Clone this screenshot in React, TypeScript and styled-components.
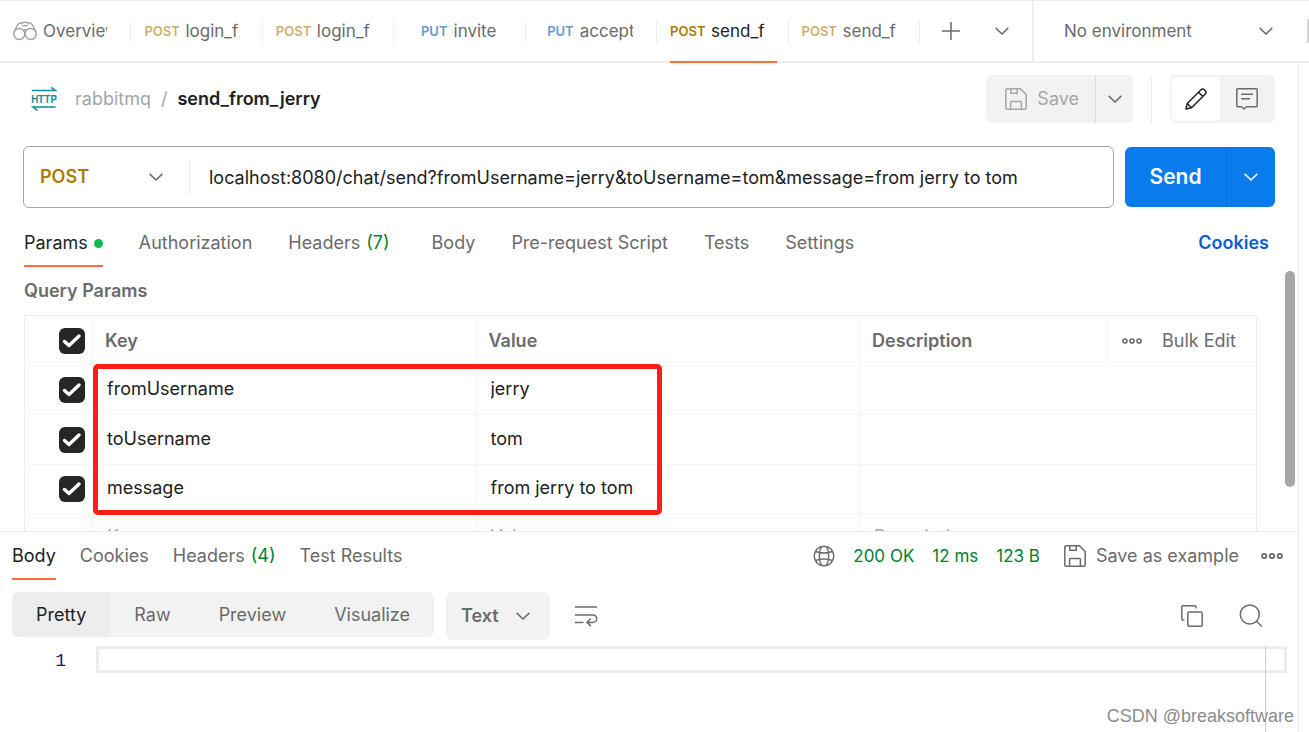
import React from "react";
import styled, { createGlobalStyle } from "styled-components";

const color = {
  text: "#212121",
  muted: "#6b6b6b",
  faint: "#a6a6a6",
  line: "#ededed",
  lineSoft: "#f6f6f6",
  fill: "#f2f2f2",
  orange: "#ff6c37",
  green: "#007f31",
  post: "#ad7a03",
  put: "#0053b8",
  blue: "#097bed",
};

const Global = createGlobalStyle`
  * { box-sizing: border-box; }
  body { margin: 0; background: #fff; }
  body, button, input, select {
    font-family: Inter, "Liberation Sans", sans-serif;
    font-size: 18px;
    line-height: 24px;
    color: ${color.muted};
  }
  button, input, select { border: 0; margin: 0; padding: 0; background: none; outline: none; border-radius: 0; }
  button, select { cursor: pointer; }
  svg { display: block; flex: none; }
`;

const Page = styled.div`
  position: relative;
  display: flex;
  flex-direction: column;
  height: 100vh;
  overflow: hidden;
`;

const TopBar = styled.header`
  display: flex;
  flex: none;
  height: 63px;
  border-top: 1px solid ${color.line};
  border-bottom: 2px solid ${color.line};
`;

const TabStrip = styled.nav`
  display: flex;
  flex: 0 1 920px;
  min-width: 0;
`;

const RequestTab = styled.button<{ $active?: boolean }>`
  position: relative;
  display: flex;
  flex: 1 1 0;
  min-width: 0;
  height: 60px;
  align-items: center;
  padding: 0 24px 0 13px;
  font-size: 17px;
  color: ${(p) => (p.$active ? color.text : color.muted)};
  &::before {
    content: "";
    position: absolute;
    right: 0;
    top: 19px;
    height: 24px;
    border-right: 1px solid ${color.line};
  }
  &::after {
    content: "";
    position: absolute;
    display: ${(p) => (p.$active ? "block" : "none")};
    left: 13px;
    right: 12px;
    bottom: -2px;
    height: 2px;
    background: ${color.orange};
  }
`;

const TabClip = styled.span<{ $centered?: boolean }>`
  display: flex;
  flex: 1;
  min-width: 0;
  align-items: center;
  justify-content: ${(p) => (p.$centered ? "center" : "flex-start")};
  gap: 6px;
  overflow: hidden;
  white-space: nowrap;
`;

const Method = styled.span<{ $kind: string; $active?: boolean }>`
  flex: none;
  width: 35px;
  font-size: 13px;
  font-weight: 600;
  text-align: right;
  color: ${(p) => (p.$kind === "POST" ? color.post : color.put)};
  opacity: ${(p) => (p.$active ? 1 : 0.6)};
`;

const TabActions = styled.div`
  display: flex;
  flex: 1;
  align-items: center;
  justify-content: space-between;
  padding: 0 23px 0 21px;
`;

const IconButton = styled.button`
  display: flex;
  align-items: center;
  justify-content: center;
  color: ${color.muted};
`;

const SelectBox = styled.label`
  position: relative;
  display: flex;
  align-items: center;
  flex: none;
  svg { position: absolute; pointer-events: none; }
  select { appearance: none; width: 100%; height: 100%; }
`;

const EnvSelect = styled(SelectBox)`
  width: 277px;
  border-left: 2px solid ${color.line};
  select { padding-left: 30px; font-size: 17px; }
  svg { right: 36px; }
  &::after {
    content: "";
    position: absolute;
    right: 0;
    height: 24px;
    border-right: 2px solid #d4d4d4;
  }
`;

const Workspace = styled.main`
  display: flex;
  flex: 1;
  min-height: 0;
  flex-direction: column;
  margin-right: 10px;
  border-right: 1px solid ${color.line};
`;

const RequestPane = styled.section`
  display: flex;
  flex: 1;
  min-height: 0;
  flex-direction: column;
  overflow: hidden;
`;

const TitleRow = styled.div`
  display: flex;
  flex: none;
  align-items: center;
  padding: 12px 23px 0 31px;
`;

const Crumbs = styled.div`
  display: flex;
  flex: 1;
  gap: 10px;
  padding-left: 18px;
  color: ${color.faint};
  strong { font-weight: 600; color: ${color.text}; }
`;

const SaveGroup = styled.div`
  display: flex;
  height: 48px;
  border-radius: 6px;
  background: ${color.fill};
`;

const SaveButton = styled.button`
  display: flex;
  align-items: center;
  gap: 10px;
  padding: 0 16px 0 19px;
  color: ${color.faint};
  border-right: 1px solid #dcdcdc;
`;

const SaveMore = styled(IconButton)`
  width: 37px;
`;

const Divider = styled.span`
  width: 1px;
  height: 48px;
  margin: 0 18px;
  background: ${color.line};
`;

const ViewToggle = styled.div`
  display: flex;
  height: 48px;
  padding: 1px;
  border-radius: 6px;
  background: ${color.fill};
`;

const ViewButton = styled(IconButton)<{ $active?: boolean }>`
  width: ${(p) => (p.$active ? 49 : 54)}px;
  height: 44px;
  margin-top: 1px;
  border-radius: 5px;
  color: ${(p) => (p.$active ? color.text : color.muted)};
  background: ${(p) => (p.$active ? "#fff" : "transparent")};
`;

const UrlRow = styled.form`
  display: flex;
  flex: none;
  align-items: center;
  gap: 11px;
  padding: 23px 23px 0;
`;

const UrlBox = styled.div`
  display: flex;
  flex: 1;
  height: 62px;
  align-items: center;
  border: 1px solid ${color.faint};
  border-radius: 6px;
`;

const MethodSelect = styled(SelectBox)`
  width: 166px;
  height: 36px;
  border-right: 1px solid ${color.line};
  select { padding-left: 16px; font-weight: 600; color: ${color.post}; }
  svg { right: 26px; }
`;

const UrlInput = styled.input`
  flex: 1;
  min-width: 0;
  height: 36px;
  padding: 0 19px;
  color: ${color.text};
`;

const SendGroup = styled.div`
  display: flex;
  height: 60px;
  border-radius: 6px;
  overflow: hidden;
  background: ${color.blue};
`;

const SendButton = styled.button`
  width: 102px;
  font-size: 21px;
  font-weight: 600;
  color: #fff;
  border-right: 1px solid #0a6fd6;
`;

const SendMore = styled(IconButton)`
  width: 48px;
  color: #fff;
`;

const SectionTabs = styled.div<{ $gap: number }>`
  display: flex;
  flex: none;
  align-items: flex-start;
  gap: ${(p) => p.$gap}px;
`;

const SectionTab = styled.button<{ $active?: boolean }>`
  display: flex;
  align-items: center;
  height: 36px;
  padding-bottom: 10px;
  white-space: nowrap;
  color: ${(p) => (p.$active ? color.text : color.muted)};
  border-bottom: 2px solid ${(p) => (p.$active ? color.orange : "transparent")};
`;

const Count = styled.span<{ $spaced?: boolean }>`
  margin-left: 6px;
  margin-right: ${(p) => (p.$spaced ? 6 : 0)}px;
  color: ${color.green};
`;

const Dot = styled.span`
  width: 9px;
  height: 9px;
  margin-left: 6px;
  border-radius: 50%;
  background: #0cbb52;
`;

const RequestTabs = styled.div`
  display: flex;
  flex: none;
  justify-content: space-between;
  padding: 23px 29px 0 24px;
`;

const CookiesLink = styled.a`
  font-weight: 600;
  color: #0b5ed0;
  text-decoration: none;
`;

const ParamsArea = styled.div`
  display: flex;
  flex: 1;
  min-height: 0;
  padding: 4px 3px 0 24px;
`;

const ParamsContent = styled.div`
  flex: 1;
  min-width: 0;
  overflow: hidden;
`;

const ParamsTitle = styled.h2`
  margin: 8px 0 12px;
  font-size: 18px;
  line-height: 24px;
  font-weight: 600;
`;

const Scrollbar = styled.div`
  flex: none;
  width: 10px;
  height: 216px;
  margin-left: 28px;
  border-radius: 5px;
  background: ${color.faint};
`;

const TableWrap = styled.div`
  position: relative;
`;

const ParamTable = styled.table`
  width: 100%;
  table-layout: fixed;
  border-collapse: collapse;
  border: 1px solid ${color.line};
  thead tr, tbody tr:nth-child(even) { height: 50px; }
  tbody tr:nth-child(odd) { height: 49px; }
  tbody tr:last-child { height: 48px; }
  th, td {
    padding: 0 0 0 12px;
    border: 1px solid ${color.lineSoft};
    text-align: left;
    font-weight: 600;
  }
  td { padding: 0 0 2px 14px; }
  tr > :first-child { padding: 0 7px 0 0; border-left-color: ${color.line}; }
  tr > :last-child { border-right-color: ${color.line}; }
  thead th { border-top-color: ${color.line}; }
`;

const CellInput = styled.input`
  width: 100%;
  color: ${color.text};
  &::placeholder { color: ${color.faint}; opacity: 1; }
`;

const TickLabel = styled.label`
  position: relative;
  display: block;
  width: 26px;
  height: 26px;
  margin-left: auto;
  input {
    display: block;
    appearance: none;
    width: 26px;
    height: 26px;
    border-radius: 6px;
    background: #262626;
  }
  svg { position: absolute; inset: 0; }
`;

const HeadActions = styled.div`
  display: flex;
  align-items: center;
  gap: 20px;
  padding-left: 2px;
  white-space: nowrap;
`;

const Highlight = styled.div`
  position: absolute;
  left: 69px;
  top: 49px;
  width: 569px;
  height: 151px;
  border: 5px solid #ff1d15;
  border-radius: 5px;
  pointer-events: none;
`;

const ResponsePane = styled.section`
  flex: 0 0 201px;
  display: flex;
  flex-direction: column;
  border-top: 1px solid ${color.line};
`;

const ResponseHead = styled.div`
  display: flex;
  justify-content: space-between;
  padding: 12px 15px 0 12px;
`;

const Status = styled.div`
  display: flex;
  align-items: center;
  height: 24px;
  gap: 18px;
  font-size: 17px;
  color: ${color.green};
  white-space: nowrap;
  > :first-child { color: ${color.muted}; }
`;

const SaveExample = styled(IconButton)`
  gap: 10px;
  margin: 0 4px 0 6px;
`;

const FormatRow = styled.div`
  display: flex;
  align-items: flex-start;
  padding: 12px 35px 0 12px;
`;

const Segments = styled.div`
  display: flex;
  border-radius: 6px;
  overflow: hidden;
  background: ${color.fill};
`;

const Segment = styled.button<{ $active?: boolean }>`
  height: 45px;
  padding: 0 24px;
  color: ${(p) => (p.$active ? color.text : color.muted)};
  background: ${(p) => (p.$active ? color.line : "transparent")};
`;

const FormatSelect = styled(SelectBox)`
  width: 104px;
  height: 48px;
  margin: 0 25px 0 12px;
  border-radius: 6px;
  background: ${color.fill};
  select { padding-left: 15px; font-weight: 600; }
  svg { right: 20px; }
`;

const FormatTools = styled.div`
  display: flex;
  flex: 1;
  height: 48px;
  align-items: center;
  gap: 36px;
  > :first-child { margin-right: auto; }
`;

const Editor = styled.div`
  display: flex;
  flex: 1;
  padding: 6px 11px 0 0;
`;

const LineNumber = styled.span`
  width: 96px;
  padding-right: 30px;
  text-align: right;
  font-family: "Liberation Mono", monospace;
  line-height: 30px;
  color: #0b216f;
`;

const CodeArea = styled.div`
  position: relative;
  flex: 1;
  &::after {
    content: "";
    position: absolute;
    top: 0;
    bottom: 0;
    right: 0;
    width: 21px;
    border-left: 1px solid #d0d0d0;
    pointer-events: none;
  }
`;

const CodeLine = styled.input`
  display: block;
  width: 100%;
  height: 27px;
  border: 3px solid ${color.line};
  font-family: "Liberation Mono", monospace;
`;

const Watermark = styled.div`
  position: absolute;
  right: 15px;
  bottom: 4px;
  font-family: "Liberation Sans", sans-serif;
  color: #8c8c8c;
`;

const Chevron = () => (
  <svg width="14" height="8" viewBox="0 0 14 8" fill="none" stroke="currentColor" strokeWidth="1.5">
    <path d="M.7.9 7 7 13.300.9" />
  </svg>
);

const Binoculars = () => (
  <svg width="24" height="20" viewBox="0 0 24 20" fill="none" stroke="#a0a0a0" strokeWidth="1.4">
    <circle cx="6.300" cy="13" r="5.500" />
    <circle cx="17.700" cy="13" r="5.500" />
    <path d="M1 11 4.500 4C5.500 2.300 7.300 1.600 9 2M23 11 19.500 4C18.500 2.300 16.700 1.600 15 2M8.500 3.500C9 .3 15 .3 15.500 3.500M9.500 5.500Q12 3.500 14.500 5.500M10.800 9Q12 8 13.200 9" />
  </svg>
);

const HttpIcon = () => (
  <svg width="26" height="24" viewBox="0 0 26 24" fill="none" stroke="#0e8a9b" strokeWidth="1.500">
    <path d="M1 3.500H24.500L20 .5M24.500 20H2L6.500 23.300" />
    <text
      x="13"
      y="16"
      textAnchor="middle"
      fill="#0e8a9b"
      stroke="none"
      fontFamily="Roboto, sans-serif"
      fontSize="10"
      fontWeight="600"
    >
      HTTP
    </text>
  </svg>
);

const Floppy = () => (
  <svg width="22" height="22" viewBox="0 0 22 22" fill="none" stroke="currentColor" strokeWidth="1.500">
    <path d="M2 .8h13.500l5.700 5.700V20a1.200 1.200 0 0 1-1.200 1.200H2A1.200 1.200 0 0 1 .8 20V2A1.200 1.200 0 0 1 2 .8Z" />
    <path d="M5.800 1v4.200h6.400V1M5.600 21v-6.500a1 1 0 0 1 1-1h8.800a1 1 0 0 1 1 1V21" />
  </svg>
);

const Pencil = () => (
  <svg width="22" height="22" viewBox="0 0 22 22" fill="none" stroke="currentColor" strokeWidth="1.500" strokeLinejoin="round">
    <path d="M1 21 2.200 15.500 16 1.700a2.300 2.300 0 0 1 3.300 0l1 1a2.300 2.300 0 0 1 0 3.300L6.500 19.800ZM13.500 4.200l4.300 4.300M2.200 15.500l4.300 4.300" />
  </svg>
);

const Comment = () => (
  <svg width="22" height="22" viewBox="0 0 22 22" fill="none" stroke="currentColor" strokeWidth="1.500">
    <path d="M1.800.8h18.400a1 1 0 0 1 1 1v16a1 1 0 0 1-1 1H10.500L8 21 5.500 18.800H1.800a1 1 0 0 1-1-1v-16a1 1 0 0 1 1-1ZM5 6.300h12M5 10.800h9" />
  </svg>
);

const Dots = ({ width = 22 }: { width?: number }) => (
  <svg width={width} height="8" viewBox="0 0 22 8" fill="none" stroke="currentColor" strokeWidth="1.800">
    <circle cx="3.200" cy="4" r="2.200" />
    <circle cx="11" cy="4" r="2.200" />
    <circle cx="18.800" cy="4" r="2.200" />
  </svg>
);

const Globe = () => (
  <svg width="22" height="22" viewBox="0 0 22 22" fill="none" stroke="currentColor" strokeWidth="1.400">
    <circle cx="11" cy="11" r="9.800" />
    <path d="M8.500 1.500C5.500 7 5.500 15 8.500 20.500M13.500 1.500C16.500 7 16.500 15 13.500 20.500M2.500 6.500Q11 9.500 19.500 6.500M2.500 15.500Q11 12.500 19.500 15.500" />
  </svg>
);

const WrapIcon = () => (
  <svg width="23" height="22" viewBox="0 0 23 22" fill="none" stroke="currentColor" strokeWidth="1.500">
    <path d="M0 2h22M0 10h18a3.600 3.600 0 0 1 0 7.400H12M15.800 13.500 12 17.400l3.800 3.800M0 17.500h8.500" />
  </svg>
);

const CopyIcon = () => (
  <svg width="22" height="22" viewBox="0 0 22 22" fill="none" stroke="currentColor" strokeWidth="1.500">
    <rect x="6.800" y="7" width="14.400" height="14.200" rx="1.500" />
    <path d="M3.500 15H2A1.200 1.200 0 0 1 .8 13.800V2A1.200 1.200 0 0 1 2 .8h11.800A1.200 1.200 0 0 1 15 2v1.500" />
  </svg>
);

const SearchIcon = () => (
  <svg width="24" height="24" viewBox="0 0 24 24" fill="none" stroke="currentColor" strokeWidth="1.500">
    <circle cx="10.800" cy="10.500" r="9.500" />
    <path d="m17.500 17.200 5.300 5.300" />
  </svg>
);

const Plus = () => (
  <svg width="20" height="20" viewBox="0 0 20 20" stroke="currentColor" strokeWidth="1.500">
    <path d="M10 1v18M1 10h18" />
  </svg>
);

const tabs = [
  { id: 1, method: "POST", name: "login_fr" },
  { id: 2, method: "POST", name: "login_fr" },
  { id: 3, method: "PUT", name: "invite", centered: true },
  { id: 4, method: "PUT", name: "accept" },
  { id: 5, method: "POST", name: "send_f", active: true },
  { id: 6, method: "POST", name: "send_f" },
];

const TabName = styled.span`
  min-width: 0;
  overflow: hidden;
`;

const params = [
  ["fromUsername", "jerry"],
  ["toUsername", "tom"],
  ["message", "from jerry to tom"],
];

const Tick = ({ label }: { label: string }) => (
  <TickLabel>
    <input type="checkbox" defaultChecked aria-label={label} />
    <svg width="26" height="26" viewBox="0 0 26 26" fill="none" stroke="#fff" strokeWidth="3.400" strokeLinecap="round" strokeLinejoin="round">
      <path d="m5.500 13.500 4.500 4L20 8" />
    </svg>
  </TickLabel>
);

export default function App() {
  return (
    <Page>
      <Global />
      <TopBar>
        <TabStrip>
          <RequestTab>
            <TabClip>
              <Binoculars />
              <TabName>Overview</TabName>
            </TabClip>
          </RequestTab>
          {tabs.map((t) => (
            <RequestTab key={t.id} $active={t.active}>
              <TabClip $centered={t.centered}>
                <Method $kind={t.method} $active={t.active}>{t.method}</Method>
                <TabName>{t.name}</TabName>
              </TabClip>
            </RequestTab>
          ))}
        </TabStrip>
        <TabActions>
          <IconButton aria-label="New tab"><Plus /></IconButton>
          <IconButton aria-label="Tab list"><Chevron /></IconButton>
        </TabActions>
        <EnvSelect>
          <select aria-label="Environment"><option>No environment</option></select>
          <Chevron />
        </EnvSelect>
      </TopBar>
      <Workspace>
        <RequestPane>
          <TitleRow>
            <HttpIcon />
            <Crumbs>
              <span>rabbitmq</span>
              <span>/</span>
              <strong>send_from_jerry</strong>
            </Crumbs>
            <SaveGroup>
              <SaveButton><Floppy />Save</SaveButton>
              <SaveMore aria-label="Save options"><Chevron /></SaveMore>
            </SaveGroup>
            <Divider />
            <ViewToggle>
              <ViewButton $active aria-label="Edit"><Pencil /></ViewButton>
              <ViewButton aria-label="Comments"><Comment /></ViewButton>
            </ViewToggle>
          </TitleRow>
          <UrlRow onSubmit={(e) => e.preventDefault()}>
            <UrlBox>
              <MethodSelect>
                <select aria-label="Method"><option>POST</option></select>
                <Chevron />
              </MethodSelect>
              <UrlInput
                aria-label="Request URL"
                defaultValue="localhost:8080/chat/send?fromUsername=jerry&toUsername=tom&message=from jerry to tom"
              />
            </UrlBox>
            <SendGroup>
              <SendButton>Send</SendButton>
              <SendMore type="button" aria-label="Send options"><Chevron /></SendMore>
            </SendGroup>
          </UrlRow>
          <RequestTabs>
            <SectionTabs $gap={36}>
              <SectionTab $active>Params<Dot /></SectionTab>
              <SectionTab>Authorization</SectionTab>
              <SectionTab>Headers<Count $spaced>(7)</Count></SectionTab>
              <SectionTab>Body</SectionTab>
              <SectionTab>Pre-request Script</SectionTab>
              <SectionTab>Tests</SectionTab>
              <SectionTab>Settings</SectionTab>
            </SectionTabs>
            <CookiesLink href="#cookies">Cookies</CookiesLink>
          </RequestTabs>
          <ParamsArea>
            <ParamsContent>
              <ParamsTitle>Query Params</ParamsTitle>
              <TableWrap>
                <ParamTable>
                  <colgroup>
                    <col style={{ width: 68 }} />
                    <col />
                    <col />
                    <col style={{ width: 248 }} />
                    <col style={{ width: 149 }} />
                  </colgroup>
                  <thead>
                    <tr>
                      <th><Tick label="Select all" /></th>
                      <th>Key</th>
                      <th>Value</th>
                      <th>Description</th>
                      <th>
                        <HeadActions>
                          <IconButton aria-label="More columns"><Dots width={20} /></IconButton>
                          <button>Bulk Edit</button>
                        </HeadActions>
                      </th>
                    </tr>
                  </thead>
                  <tbody>
                    {params.map(([key, value]) => (
                      <tr key={key}>
                        <td><Tick label={`Use ${key}`} /></td>
                        <td><CellInput aria-label="Key" defaultValue={key} /></td>
                        <td><CellInput aria-label="Value" defaultValue={value} /></td>
                        <td colSpan={2}><CellInput aria-label="Description" /></td>
                      </tr>
                    ))}
                    <tr>
                      <td />
                      <td><CellInput aria-label="Key" placeholder="Key" /></td>
                      <td><CellInput aria-label="Value" placeholder="Value" /></td>
                      <td colSpan={2}><CellInput aria-label="Description" placeholder="Description" /></td>
                    </tr>
                  </tbody>
                </ParamTable>
                <Highlight />
              </TableWrap>
            </ParamsContent>
            <Scrollbar />
          </ParamsArea>
        </RequestPane>
        <ResponsePane>
          <ResponseHead>
            <SectionTabs $gap={24}>
              <SectionTab $active>Body</SectionTab>
              <SectionTab>Cookies</SectionTab>
              <SectionTab>Headers<Count>(4)</Count></SectionTab>
              <SectionTab>Test Results</SectionTab>
            </SectionTabs>
            <Status>
              <IconButton aria-label="Network"><Globe /></IconButton>
              <span>200 OK</span>
              <span>12 ms</span>
              <span>123 B</span>
              <SaveExample><Floppy />Save as example</SaveExample>
              <IconButton aria-label="More"><Dots /></IconButton>
            </Status>
          </ResponseHead>
          <FormatRow>
            <Segments>
              <Segment $active>Pretty</Segment>
              <Segment>Raw</Segment>
              <Segment>Preview</Segment>
              <Segment>Visualize</Segment>
            </Segments>
            <FormatSelect>
              <select aria-label="Format"><option>Text</option></select>
              <Chevron />
            </FormatSelect>
            <FormatTools>
              <IconButton aria-label="Wrap lines"><WrapIcon /></IconButton>
              <IconButton aria-label="Copy"><CopyIcon /></IconButton>
              <IconButton aria-label="Search"><SearchIcon /></IconButton>
            </FormatTools>
          </FormatRow>
          <Editor>
            <LineNumber>1</LineNumber>
            <CodeArea><CodeLine aria-label="Response body" readOnly /></CodeArea>
          </Editor>
        </ResponsePane>
      </Workspace>
      <Watermark>CSDN @breaksoftware</Watermark>
    </Page>
  );
}
